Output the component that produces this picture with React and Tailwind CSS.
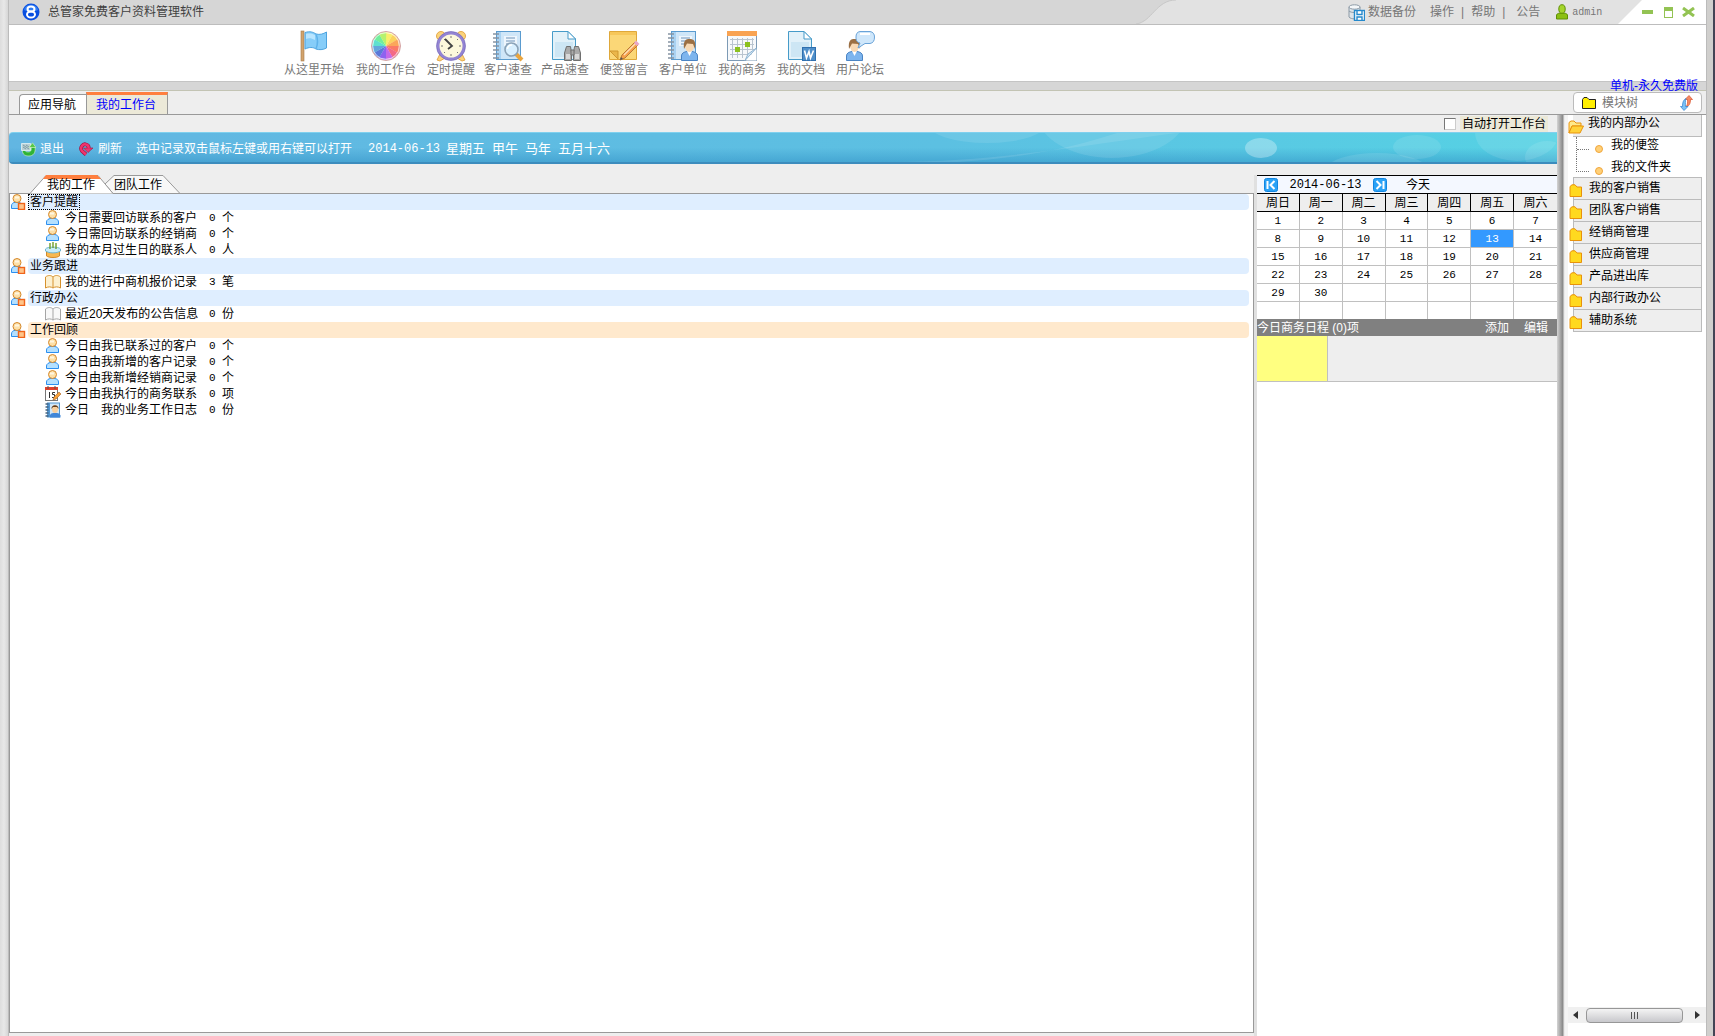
import React from 'react'

const tools = [
  { label: '从这里开始', icon: FlagIcon, className: 'ml-[274px] w-[62px]' },
  { label: '我的工作台', icon: WheelIcon, className: 'ml-[10px] w-[62px]' },
  { label: '定时提醒', icon: ClockIcon, className: 'ml-[9px] w-[50px]' },
  { label: '客户速查', icon: BookSearchIcon, className: 'ml-[7px] w-[50px]' },
  { label: '产品速查', icon: BinocularsIcon, className: 'ml-[7px] w-[50px]' },
  { label: '便签留言', icon: NoteIcon, className: 'ml-[9px] w-[50px]' },
  { label: '客户单位', icon: ContactIcon, className: 'ml-[9px] w-[50px]' },
  { label: '我的商务', icon: CalendarIcon, className: 'ml-[9px] w-[50px]' },
  { label: '我的文档', icon: WordIcon, className: 'ml-[9px] w-[50px]' },
  { label: '用户论坛', icon: ForumIcon, className: 'ml-[9px] w-[50px]' },
]

const groups = [
  {
    title: '客户提醒',
    selected: true,
    items: [
      { icon: PersonIcon, text: '今日需要回访联系的客户', count: 0, unit: '个' },
      { icon: PersonIcon, text: '今日需回访联系的经销商', count: 0, unit: '个' },
      { icon: CakeIcon, text: '我的本月过生日的联系人', count: 0, unit: '人' },
    ],
  },
  {
    title: '业务跟进',
    items: [{ icon: GoldBookIcon, text: '我的进行中商机报价记录', count: 3, unit: '笔' }],
  },
  {
    title: '行政办公',
    items: [{ icon: GrayBookIcon, text: '最近20天发布的公告信息', count: 0, unit: '份' }],
  },
  {
    title: '工作回顾',
    warm: true,
    items: [
      { icon: PersonIcon, text: '今日由我已联系过的客户', count: 0, unit: '个' },
      { icon: PersonIcon, text: '今日由我新增的客户记录', count: 0, unit: '个' },
      { icon: PersonIcon, text: '今日由我新增经销商记录', count: 0, unit: '个' },
      { icon: DateIcon, text: '今日由我执行的商务联系', count: 0, unit: '项' },
      { icon: SmallContactIcon, text: '今日　我的业务工作日志', count: 0, unit: '份' },
    ],
  },
]

const weekdays = ['周日', '周一', '周二', '周三', '周四', '周五', '周六']
const weeks = Array.from({ length: 6 }, (_, w) =>
  Array.from({ length: 7 }, (_, d) => (w * 7 + d + 1 <= 30 ? w * 7 + d + 1 : null)),
)

const modules = ['我的客户销售', '团队客户销售', '经销商管理', '供应商管理', '产品进出库', '内部行政办公', '辅助系统']

function FlagIcon() {
  return (
    <svg width="32" height="32" viewBox="0 0 32 32">
      <rect x="3" y="1" width="3" height="30" fill="#d2a36c" stroke="#a67b4b" strokeWidth=".6" />
      <path d="M7 2.500C12 1 15 2 18 4C22 5 25 4 28.500 2V18C25 20 21 20 18 19C15 17 11 17 7 19Z" fill="#86cdf9" stroke="#4ea3de" />
      <path d="M18 4C20 9 20 14 18 19" fill="none" stroke="#5eb2ea" strokeWidth="1.500" />
      <path d="M8 4C12 3 15 4 17 5V10C13 8 11 8 8 9Z" fill="#b9e5ff" />
    </svg>
  )
}

const wheelColors = ['#f9ee6a', '#fbd35f', '#fba65a', '#fb7a66', '#f36a86', '#c469e8', '#8d62ef', '#5b78d8', '#62a6dc', '#5ee0cf', '#71ee9c', '#b6f26e']

function WheelIcon() {
  return (
    <svg width="32" height="32" viewBox="0 0 32 32">
      {wheelColors.map((color, i) => {
        const a = ((i * 30 - 90) * Math.PI) / 180
        const b = ((i * 30 - 59) * Math.PI) / 180
        return (
          <path
            key={color}
            d={`M16 16L${16 + 14 * Math.cos(a)} ${16 + 14 * Math.sin(a)}A14 14 0 0 1 ${16 + 14 * Math.cos(b)} ${16 + 14 * Math.sin(b)}Z`}
            fill={color}
          />
        )
      })}
      <circle cx="16" cy="16" r="14.500" fill="none" stroke="#c98a8a" strokeOpacity=".8" />
      <circle cx="16" cy="16" r="13.300" fill="none" stroke="#fff" strokeOpacity=".7" />
    </svg>
  )
}

function ClockIcon() {
  return (
    <svg width="32" height="32" viewBox="0 0 32 32">
      <g fill="#fbd37a" stroke="#e5a94a">
        <circle cx="6" cy="6" r="4.500" />
        <circle cx="26" cy="6" r="4.500" />
        <path d="M5 24L2 30L5 31L10 28ZM27 24L30 30L27 31L22 28Z" />
      </g>
      <circle cx="16" cy="16" r="13" fill="#fdf8dc" stroke="#9384d3" strokeWidth="3" />
      <circle cx="16" cy="16" r="14.500" fill="none" stroke="#6f62b5" strokeWidth=".6" />
      <path d="M16 6V8M16 24V26M6 16H8M24 16H26M9 9L10 10M23 23L22 22M9 23L10 22M23 9L22 10" stroke="#777" />
      <path d="M10 9L17 16L13 19" fill="none" stroke="#444" strokeWidth="1.800" />
    </svg>
  )
}

function Notebook() {
  return (
    <>
      <rect x="4.500" y="1.500" width="24" height="28" fill="#a9d2f2" stroke="#5a9bcf" />
      <rect x="9" y="2" width="19" height="27" fill="#cfe6f8" />
      <path d="M1 4H7M1 8H7M1 12H7M1 16H7M1 20H7M1 24H7M1 28H7" stroke="#8694a3" strokeWidth="1.500" />
      <rect x="12" y="6" width="13" height="10" fill="#eef6fd" />
      <path d="M14 8H23M14 11H23M14 14H20" stroke="#6f93b8" />
    </>
  )
}

function BookSearchIcon() {
  return (
    <svg width="32" height="32" viewBox="0 0 32 32">
      <Notebook />
      <path d="M24 24L30 30" stroke="#e9a53f" strokeWidth="4" />
      <circle cx="19.500" cy="19.500" r="6.500" fill="#d9f0ff" stroke="#8ba3b8" strokeWidth="1.600" />
      <path d="M15.500 19A4 4 0 0 1 20 15" fill="none" stroke="#fff" strokeWidth="1.500" />
    </svg>
  )
}

function Sheet() {
  return (
    <>
      <path d="M3.500 1.500H19L26.500 9V29.500H3.500Z" fill="#e2f1f9" stroke="#469bc9" />
      <path d="M6 12H24V27H6Z" fill="#cde6f4" />
      <path d="M19 1.500V9H26.500Z" fill="#fff" stroke="#469bc9" />
    </>
  )
}

function BinocularsIcon() {
  return (
    <svg width="32" height="32" viewBox="0 0 32 32">
      <Sheet />
      <g fill="#aaa" stroke="#6f6f6f">
        <path d="M17.500 16.500H21.500L22.500 23V30.500H15.500V23ZM25.500 16.500H29.500L31.500 23V30.500H24.500V23Z" />
        <path d="M22 20H25V25H22Z" />
      </g>
      <path d="M17 24H21V29H17ZM26 24H30V29H26Z" fill="#d8d8d8" />
    </svg>
  )
}

function NoteIcon() {
  return (
    <svg width="32" height="32" viewBox="0 0 32 32">
      <path d="M1.500 1.500H28.500V29.500H1.500Z" fill="#fbd777" stroke="#dfa83a" />
      <path d="M2 2H28V5H2Z" fill="#f7c75a" />
      <path d="M2 21L10 21V29Z" fill="#eab64a" stroke="#cf9731" />
      <path d="M12 30L14 25L27 12L30 15L17 28Z" fill="#f7a14a" stroke="#b97936" />
      <path d="M16 25L27.500 13.500" stroke="#fde0b8" strokeWidth="1.500" />
      <path d="M26 13L28 10.500L31.500 14L29 16Z" fill="#e7a7c8" />
      <path d="M12 30L13 27L15 29Z" fill="#555" />
    </svg>
  )
}

function Bust() {
  return (
    <>
      <path d="M14.500 30.500V26C14.500 23 17 22 20 21.500H25C28 22 30.500 23 30.500 26V30.500Z" fill="#7db5ee" stroke="#4a84c4" />
      <path d="M20 21L22.500 26L25 21Z" fill="#fff" />
      <ellipse cx="22.500" cy="16" rx="4.500" ry="6" fill="#f8d9b4" />
      <path d="M17 19C16 10 19 9 22.500 9C27 9 29 11 28 19L26 14L20 13.500Z" fill="#9b6f43" />
    </>
  )
}

function ContactIcon() {
  return (
    <svg width="32" height="32" viewBox="0 0 32 32">
      <Notebook />
      <Bust />
    </svg>
  )
}

function CalendarIcon() {
  return (
    <svg width="32" height="32" viewBox="0 0 32 32">
      <rect x="1.500" y="1.500" width="29" height="29" fill="#f7f9fb" stroke="#7d9ab5" />
      <path d="M1 1H31V6H1Z" fill="#f9a352" />
      <path d="M4 9.500H28M4 14.500H28M4 19.500H28M4 24.500H28M6.500 8V28M11.500 8V28M16.500 8V28M21.500 8V28M26.500 8V20" stroke="#b9c4cf" />
      <path d="M19 12H24V17H19ZM9 17H14V22H9Z" fill="#8cc11f" />
      <path d="M30.500 18L19 30.500L22 24L30.500 18Z" fill="#d5e8f6" stroke="#90b5d2" />
      <path d="M30.500 19V30.500H20Z" fill="#fff" />
    </svg>
  )
}

function WordIcon() {
  return (
    <svg width="32" height="32" viewBox="0 0 32 32">
      <Sheet />
      <rect x="17.500" y="17.500" width="13" height="13" fill="#4f8fca" stroke="#2f6fae" />
      <path d="M19.500 20.500L21.500 28L24 21.500L25.500 28L28.500 20.500" fill="none" stroke="#fff" strokeWidth="1.600" />
    </svg>
  )
}

function ForumIcon() {
  return (
    <svg width="32" height="32" viewBox="0 0 32 32">
      <g transform="translate(-12)">
        <Bust />
      </g>
      <path d="M16 1.500H26C29 2 30.500 4 30.500 7C30.500 11 29 13 26 13.500H21L14 18L16 13C12.500 12 12 10 12 7C12 4 13 2 16 1.500Z" fill="#cfe7fb" stroke="#6aa3d8" />
      <path d="M16 4H26" stroke="#fff" strokeWidth="2" />
    </svg>
  )
}

function PersonIcon() {
  return (
    <svg width="16" height="16" viewBox="0 0 16 16">
      <path d="M1.500 14.500V12C1.500 9.500 4 9 5 8.500H10C12 9 13.500 10 13.500 12V14.500Z" fill="#b4e0ff" stroke="#2b8ff0" />
      <circle cx="7.500" cy="4.500" r="4" fill="#fde0a8" stroke="#d4872a" />
      <path d="M5 3.500H9" stroke="#fff6e0" strokeWidth="2" />
    </svg>
  )
}

function GroupIcon() {
  return (
    <svg width="16" height="16" viewBox="0 0 16 16">
      <path d="M1.500 14.500V12C1.500 9.500 3 9 4 8.500H9C11 9 12.500 10 12.500 12V14.500Z" fill="#b4e0ff" stroke="#2b8ff0" />
      <circle cx="7" cy="4.500" r="4" fill="#fde0a8" stroke="#d4872a" />
      <path d="M5 3.500H9" stroke="#fff6e0" strokeWidth="2" />
      <rect x="8.500" y="9.500" width="6" height="6" fill="#ffc58a" stroke="#f0641a" strokeWidth="1.400" />
    </svg>
  )
}

function CakeIcon() {
  return (
    <svg width="16" height="16" viewBox="0 0 16 16">
      <path d="M1.500 9H14.500V14C12 16 4 16 1.500 14Z" fill="#f8b850" stroke="#d08a2c" />
      <path d="M.5 7C2 4.500 14 4.500 15.500 7V9C12 11.500 4 11.500 .5 9Z" fill="#c8edfb" stroke="#6fb4cf" />
      <path d="M5 1V7M8 0V6M11 1V7" stroke="#6f9e2d" strokeWidth="1.400" />
    </svg>
  )
}

function Book({ fill, stroke }) {
  return (
    <svg width="16" height="16" viewBox="0 0 16 16">
      <path d="M.5 3C3 1 6 1 8 3C10 1 13 1 15.500 3V14C13 12.500 10 12.500 8 14C6 12.500 3 12.500 .5 14Z" fill={fill} stroke={stroke} />
      <path d="M8 3V14" stroke={stroke} />
    </svg>
  )
}

function GoldBookIcon() {
  return <Book fill="#fdf0cf" stroke="#d6912c" />
}

function GrayBookIcon() {
  return <Book fill="#f8f8f8" stroke="#a5a5a5" />
}

function DateIcon() {
  return (
    <svg width="16" height="16" viewBox="0 0 16 16">
      <rect x=".5" y="2.500" width="12" height="12" fill="#fff" stroke="#777" />
      <path d="M0 1H13V4H0Z" fill="#e0402c" />
      <path d="M3 0V3M10 0V3" stroke="#555" />
      <path d="M4.500 6V12M10 6.500H7.500V8.500H9.500V11.500H7" fill="none" stroke="#333" />
      <path d="M8 14L9 11L14 6L16 8L11 13Z" fill="#f7a13a" stroke="#a8642a" strokeWidth=".6" />
    </svg>
  )
}

function SmallContactIcon() {
  return (
    <svg width="16" height="16" viewBox="0 0 32 32">
      <rect x="4" y="1" width="26" height="30" fill="#4f94d0" />
      <rect x="10" y="3" width="18" height="24" fill="#cfe6f8" />
      <path d="M1 4H7M1 10H7M1 16H7M1 22H7M1 28H7" stroke="#46637f" strokeWidth="3" />
      <path d="M10 31V26C12 22 16 22 20 22C25 22 29 22 31 27V31Z" fill="#3f86d8" />
      <ellipse cx="20" cy="14" rx="6" ry="8" fill="#f8cf9c" />
      <path d="M13 14C12 4 28 4 27 14L24 10L16 10Z" fill="#5f3d20" />
    </svg>
  )
}

function FolderIcon() {
  return (
    <svg width="14" height="14" viewBox="0 0 14 14">
      <path d="M1 2.500L3 .8H6L8 3H12.500V12.500H1Z" fill="#ffd91f" stroke="#e8920c" />
    </svg>
  )
}

function OpenFolderIcon() {
  return (
    <svg width="16" height="14" viewBox="0 0 16 14">
      <path d="M1 13V2.500L3 1H6L8 3H13V6H4Z" fill="#ffe98a" stroke="#e8920c" />
      <path d="M1 13L4 6H15.500L12 13Z" fill="#ffd23a" stroke="#e8920c" />
    </svg>
  )
}

function LogoIcon() {
  return (
    <svg width="18" height="18" viewBox="0 0 18 18">
      <circle cx="9" cy="9" r="8.500" fill="#0a4fe0" />
      <path d="M2 7C3 0 15 0 16 7C12 9 6 9 2 7Z" fill="#4a9bff" opacity=".6" />
      <g fill="none" stroke="#fff" strokeWidth="2">
        <ellipse cx="9" cy="6" rx="3.500" ry="2.500" />
        <ellipse cx="9" cy="11.500" rx="4" ry="3" />
      </g>
    </svg>
  )
}

function BackupIcon() {
  return (
    <svg width="17" height="17" viewBox="0 0 17 17">
      <path d="M1 3V13C3 15.500 10 15.500 12 13V3Z" fill="#dde3e8" stroke="#8c9aa6" />
      <ellipse cx="6.500" cy="3" rx="5.500" ry="2.200" fill="#f4f7f9" stroke="#8c9aa6" />
      <path d="M1 7C3 9 10 9 12 7" fill="none" stroke="#8c9aa6" />
      <rect x="6.500" y="6.500" width="10" height="10" fill="#fff" stroke="#2589cc" strokeWidth="1.400" />
      <path d="M9 7V10.500H14V7M9 16V13H14V16" fill="none" stroke="#2589cc" strokeWidth="1.400" />
    </svg>
  )
}

function UserIcon() {
  return (
    <svg width="12" height="16" viewBox="0 0 12 16">
      <path d="M.5 15V11C1 9.500 3 9 6 9C9 9 11 9.500 11.500 11V15Z" fill="#8bbf12" stroke="#5f9005" />
      <ellipse cx="6" cy="5" rx="3.200" ry="4.300" fill="#a5d52b" stroke="#5f9005" />
    </svg>
  )
}

function ExitIcon() {
  return (
    <svg width="15" height="15" viewBox="0 0 15 15">
      <path d="M1.500 8C1 13 5 14 8 14C12 14 15 11 14 5L10 5C11 9 9 10 7 10C5 10 4 9 4 8Z" fill="#2fb335" stroke="#d8f5c8" strokeWidth=".6" />
      <path d="M.5 1.500H9.500V8.500H.5Z" fill="#b9cfd4" stroke="#e6f2f4" strokeWidth=".8" />
      <path d="M2 3L8 7M5 3L8 5M2 5L5 7" stroke="#6f9098" strokeWidth=".8" />
      <path d="M8 5.500L11.500 .8L15 5.500Z" fill="#57c74a" stroke="#d8f5c8" strokeWidth=".6" />
    </svg>
  )
}

function RefreshIcon() {
  return (
    <svg width="14" height="14" viewBox="0 0 14 14">
      <path d="M7 12.500L3 9C.5 5.500 4 1.500 7 2.500C9 3 10 4 9.500 6.500" fill="none" stroke="#a3123f" strokeWidth="3.800" />
      <path d="M4.500 6H14L9 10.500Z" fill="#f0356f" stroke="#a3123f" strokeWidth=".6" />
      <path d="M7 12.500L3 9C.5 5.500 4 1.500 7 2.500C9 3 10 4 9.500 6.500" fill="none" stroke="#f0356f" strokeWidth="2.400" />
    </svg>
  )
}

function SwapIcon() {
  return (
    <svg width="13" height="16" viewBox="0 0 13 16">
      <path d="M9 .5L12.500 4.500H10.500C10.500 9 9 11 6 12C8 9 7.500 7 7.500 4.500H5Z" fill="#f58a62" stroke="#d8512c" strokeWidth=".7" />
      <path d="M4 15.500L.5 11.500H2.500C2.500 8 3 5 6 3.500C5 6 5.500 9 5.500 11.500H8Z" fill="#7cc3f5" stroke="#2f7fce" strokeWidth=".7" />
    </svg>
  )
}

function StepIcon({ forward }) {
  return (
    <svg width="14" height="14" viewBox="0 0 14 14">
      <rect x=".5" y=".5" width="13" height="13" rx="2" fill="#2ba2f6" stroke="#1286e0" />
      <path d={forward ? 'M3.500 3L7.500 7L3.500 11M10.500 3V11' : 'M10.500 3L6.500 7L10.500 11M3.500 3V11'} fill="none" stroke="#fff" strokeWidth="2" />
    </svg>
  )
}

function TitleBar() {
  return (
    <header className="flex h-[25px] border-b border-[#bdbdbd] bg-[#d6d6d6]">
      <div className="flex items-center gap-2 pl-[13px] text-[12px] text-[#404040]">
        <LogoIcon />
        <h1>总管家免费客户资料管理软件</h1>
      </div>
      <div className="ml-auto flex h-6 text-[12px] text-[#767676]">
        <svg width="46" height="24" viewBox="0 0 46 24" className="shrink-0">
          <path d="M0 24C16 22 20 0 40 0H46V24Z" fill="#e2e2e2" />
          <path d="M0 24C16 22 20 0 40 0" fill="none" stroke="#c8c8c8" />
        </svg>
        <nav className="flex w-[436px] items-center bg-[#e2e2e2] pl-[166px] whitespace-nowrap">
          <a href="#backup" className="flex items-center gap-[3px]"><BackupIcon />数据备份</a>
          <a href="#operate" className="ml-[14px]">操作</a>
          <span className="mx-[7px]">|</span>
          <a href="#help">帮助</a>
          <span className="mx-[7px]">|</span>
          <a href="#notice" className="ml-1">公告</a>
          <a href="#admin" className="ml-4 flex items-center gap-1 font-['Liberation_Mono','Noto_Sans_CJK_SC',monospace] text-[10px]">
            <UserIcon />admin
          </a>
        </nav>
        <svg width="24" height="24" viewBox="0 0 24 24" className="shrink-0 bg-[#e2e2e2]">
          <path d="M0 24L24 0V24Z" fill="#fff" />
        </svg>
        <div className="flex w-[64px] items-center bg-white">
          <button aria-label="最小化" className="h-1 w-[11px] bg-[#93c353]" />
          <button aria-label="最大化" className="ml-[11px] h-[11px] w-[9px] border border-t-4 border-[#93c353]" />
          <button aria-label="关闭" className="ml-[9px]">
            <svg width="13" height="10" viewBox="0 0 13 10"><path d="M1 1L12 9M12 1L1 9" stroke="#93c353" strokeWidth="3" /></svg>
          </button>
        </div>
      </div>
    </header>
  )
}

function Toolbar() {
  return (
    <div className="flex h-14 bg-white pt-[5px]">
      {tools.map(({ label, icon: Icon, className }) => (
        <button key={label} className={`flex shrink-0 flex-col items-center text-[12px] leading-4 whitespace-nowrap text-[#787878] ${className}`}>
          <Icon />
          {label}
        </button>
      ))}
    </div>
  )
}

function Banner() {
  return (
    <div className="relative flex h-8 items-center overflow-hidden rounded-l border-t border-b-2 border-t-[#7fd0ee] border-b-[#3c8cbd] bg-gradient-to-r from-[#62b6e2] via-[#5cc0e2] via-60% to-[#55d2e4] pt-[3px] text-[12px] text-white">
      <div className="absolute inset-0 bg-gradient-to-b from-transparent via-transparent to-[#2f8fc4]/50" />
      <svg className="absolute top-0 right-0" width="680" height="32" viewBox="0 0 680 32">
        <g fill="#fff" fillOpacity=".1">
          <ellipse cx="110" cy="-10" rx="60" ry="20" />
          <ellipse cx="235" cy="-20" rx="75" ry="45" />
          <path d="M0 29C120 30 220 10 300 0H240C150 30 60 32 0 29Z" />
          <ellipse cx="384" cy="15" rx="16" ry="10" fillOpacity=".3" />
          <ellipse cx="540" cy="14" rx="24" ry="12" />
          <ellipse cx="500" cy="36" rx="50" ry="16" />
          <ellipse cx="640" cy="0" rx="42" ry="28" />
          <ellipse cx="670" cy="24" rx="22" ry="16" />
        </g>
      </svg>
      <div className="relative flex items-center pl-3 whitespace-nowrap">
        <button className="flex items-center gap-1"><ExitIcon />退出</button>
        <button className="ml-[15px] flex items-center gap-[5px]"><RefreshIcon />刷新</button>
        <span className="ml-[14px]">选中记录双击鼠标左键或用右键可以打开</span>
        <span className="ml-4 font-['Liberation_Mono',monospace]">2014-06-13</span>
        <span className="ml-[6px] flex gap-[7px] text-[13px]">
          <span>星期五</span>
          <span>甲午</span>
          <span>马年</span>
          <span>五月十六</span>
        </span>
      </div>
    </div>
  )
}

function WorkTabs() {
  return (
    <div className="relative h-[18px] text-[12px] leading-4 text-black">
      <svg className="absolute left-5" width="152" height="19" viewBox="0 0 152 19">
        <path d="M76 9L85 .5H134L151 18.500H84Z" fill="#f8f8f8" stroke="#999" />
        <path d="M1 18.500L17 .5H69L84 18.500" fill="#fff" stroke="#999" />
        <path d="M17 0H68L72 4H14Z" fill="#ff7f3f" />
      </svg>
      <div className="relative flex gap-[19px] pt-[2px] pl-[38px]" role="tablist">
        <button role="tab" aria-selected="true">我的工作</button>
        <button role="tab" aria-selected="false">团队工作</button>
      </div>
    </div>
  )
}

function WorkList() {
  return (
    <section className="flex-1 border border-[#999] bg-white pr-1 text-[12px] leading-4 text-black">
      {groups.map((group) => (
        <div key={group.title}>
          <div className="flex h-4">
            <span className="w-[18px] shrink-0"><GroupIcon /></span>
            <h2 className={`flex-1 rounded ${group.warm ? 'bg-[#ffe9cd]' : 'bg-[#dfeeff]'}`}>
              <span className={group.selected ? 'inline-block h-4 border border-dotted border-black px-px leading-[15px]' : 'px-[2px]'}>{group.title}</span>
            </h2>
          </div>
          <ul>
            {group.items.map(({ icon: Icon, text, count, unit }) => (
              <li key={text} className="flex h-4 pl-[35px] leading-[17px] whitespace-nowrap">
                <Icon />
                <span className="ml-1 w-[144px]">{text}</span>
                <span className="w-[13px] font-['Liberation_Mono',monospace] text-[11px]">{count}</span>
                <span>{unit}</span>
              </li>
            ))}
          </ul>
        </div>
      ))}
    </section>
  )
}

function Calendar() {
  return (
    <section className="w-[300px] shrink-0 bg-white text-[12px] text-black">
      <div className="flex h-[18px] items-center border-t border-black bg-[#f4f8ff] pl-[7px]">
        <button aria-label="上一天"><StepIcon /></button>
        <span className="w-[95px] text-center font-['Liberation_Mono',monospace]">2014-06-13</span>
        <button aria-label="下一天"><StepIcon forward /></button>
        <button className="ml-[19px]">今天</button>
      </div>
      <table className="w-full table-fixed border-separate border-spacing-0 text-center leading-4">
        <thead>
          <tr>
            {weekdays.map((day) => (
              <th key={day} className="h-[19px] border-y border-r border-black bg-[#eee] p-0 font-normal last:border-r-0">{day}</th>
            ))}
          </tr>
        </thead>
        <tbody className="font-['Liberation_Mono',monospace] text-[11px]">
          {weeks.map((week, w) => (
            <tr key={w} className="group">
              {week.map((day, d) => (
                <td
                  key={d}
                  className={`h-[18px] border-r border-b border-[#c0c0c0] p-0 group-last:h-[17px] group-last:border-b-0 last:border-r-0 ${day === 13 ? 'bg-[#3399ff] text-white' : ''}`}
                >
                  {day}
                </td>
              ))}
            </tr>
          ))}
        </tbody>
      </table>
      <div className="flex h-[17px] items-center bg-[#808080] pr-[9px] text-white">
        <span>今日商务日程 (0)项</span>
        <button className="ml-auto">添加</button>
        <button className="ml-[15px]">编辑</button>
      </div>
      <div className="h-[46px] border-b border-[#c0c0c0] bg-[#eee]">
        <div className="h-[45px] w-[71px] border-r border-[#c0c0c0] bg-[#ffff80]" />
      </div>
    </section>
  )
}

function Sidebar() {
  return (
    <aside className="flex w-[138px] shrink-0 flex-col bg-white text-[12px] text-black">
      <ul>
        <li className="flex h-[22px] w-[134px]">
          <span className="z-10 -mr-[11px] pt-[5px]"><OpenFolderIcon /></span>
          <a href="#office" className="flex-1 border-r border-b border-[#bbb] bg-[#eee] pl-[15px] leading-4">我的内部办公</a>
        </li>
        <li className="flex h-[22px] pl-2">
          <span className="h-full w-[13px] border-l border-dotted border-[#777]">
            <span className="block h-[13px] border-b border-dotted border-[#777]" />
          </span>
          <span className="mt-2 ml-[6px] h-2 w-2 rounded-full border border-[#f0a63c] bg-[#ffd078]" />
          <a href="#note" className="ml-2 leading-4">我的便签</a>
        </li>
        <li className="flex h-[18px] pl-2">
          <span className="h-[13px] w-[13px] border-b border-l border-dotted border-[#777]" />
          <span className="mt-2 ml-[6px] h-2 w-2 rounded-full border border-[#f0a63c] bg-[#ffd078]" />
          <a href="#folder" className="ml-2 leading-4">我的文件夹</a>
        </li>
        {modules.map((name) => (
          <li key={name} className="flex h-[22px] w-[134px]">
            <span className="z-10 -mr-[11px] w-4 pt-[7px] pl-px"><FolderIcon /></span>
            <a href="#module" className="flex-1 border-t border-r border-l border-[#bbb] bg-[#eee] pl-[15px] leading-5">{name}</a>
          </li>
        ))}
        <li className="ml-[5px] w-[129px] border-t border-[#bbb]" />
      </ul>
      <div className="mt-auto mb-[13px] flex h-4 items-center bg-[#f0f0f0] pr-[6px] pl-[5px]">
        <button aria-label="向左" className="w-[13px]">
          <svg width="5" height="8" viewBox="0 0 5 8"><path d="M5 0V8L0 4Z" fill="#333" /></svg>
        </button>
        <div className="flex h-[15px] w-[97px] items-center justify-center gap-[2px] rounded-sm border border-[#979797] bg-gradient-to-b from-[#f4f4f4] to-[#c8c8cc]">
          <i className="h-[7px] w-px bg-[#555]" />
          <i className="h-[7px] w-px bg-[#555]" />
          <i className="h-[7px] w-px bg-[#555]" />
        </div>
        <button aria-label="向右" className="ml-auto">
          <svg width="5" height="8" viewBox="0 0 5 8"><path d="M0 0V8L5 4Z" fill="#333" /></svg>
        </button>
      </div>
    </aside>
  )
}

export default function App() {
  return (
    <div className="flex min-h-screen w-full bg-[#eee] font-['Liberation_Sans','Noto_Sans_CJK_SC',sans-serif]">
      <div className="w-[9px] shrink-0 border-r border-[#bbb] bg-gradient-to-r from-[#ddd] via-[#e8e8e8] to-[#d6d6d6]" />
      <div className="flex min-w-0 flex-1 flex-col">
        <TitleBar />
        <Toolbar />
        <div className="flex h-[10px] justify-end border-t border-b border-t-[#c4c4c4] border-b-[#c3c4b4] bg-[#d6d6d6] pr-2">
          <a href="#edition" className="-mt-[3px] text-[12px] leading-[14px] text-[#0000ff]">单机-永久免费版</a>
        </div>
        <div className="flex h-6 items-end border-b border-[#999] pl-[10px] text-[12px] text-black">
          <div className="flex items-end" role="tablist">
            <button role="tab" aria-selected="false" className="h-5 w-[67px] rounded-tl border-t border-l border-[#999] bg-white pr-[2px]">应用导航</button>
            <button role="tab" aria-selected="true" className="h-[22px] w-[82px] border-x border-t-3 border-x-[#999] border-t-[#ff7f3f] bg-[#ece9d8] pr-[2px] leading-4 text-[#0000ff]">我的工作台</button>
          </div>
          <div className="mr-1 mb-px ml-auto flex h-[21px] w-[129px] items-center rounded border border-[#bbb] bg-white px-2 text-[#767676]">
            <svg width="14" height="12" viewBox="0 0 14 12"><path d="M.5 2.500L2 .5H5L7 2.500H13.500V11.500H.5Z" fill="#ffee00" stroke="#222" /></svg>
            <span className="ml-[6px] flex-1">模块树</span>
            <SwapIcon />
          </div>
        </div>
        <div className="flex min-h-0 flex-1">
          <main className="flex min-w-0 flex-1 flex-col">
            <div className="flex h-[17px] items-center justify-end pr-[9px] text-[12px] leading-4 text-black">
              <label className="flex items-center gap-1">
                <input type="checkbox" className="h-3 w-3 appearance-none border border-[#ccc] border-t-[#777] border-l-[#777] bg-white" />
                <span className="bg-[#ece9d8] px-[2px]">自动打开工作台</span>
              </label>
            </div>
            <Banner />
            <div className="flex flex-1 pt-[11px]">
              <div className="mb-[3px] flex min-w-0 flex-1 flex-col">
                <WorkTabs />
                <WorkList />
              </div>
              <div className="w-[3px] shrink-0 bg-[#e0e0e0]" />
              <Calendar />
            </div>
          </main>
          <div className="w-[11px] shrink-0 bg-gradient-to-r from-[#d4d4d4] via-[#8c8c8c] via-50% to-[#f4f4f4] to-70%" />
          <Sidebar />
        </div>
      </div>
      <div className="w-[9px] shrink-0 border-r-2 border-l border-r-[#445] border-l-[#bbb] bg-[#d0cfcd]" />
    </div>
  )
}
